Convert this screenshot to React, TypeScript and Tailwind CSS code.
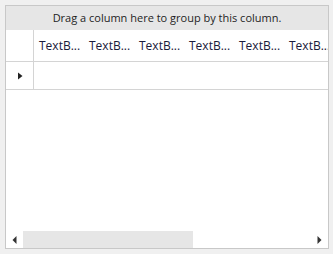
export default function App() {
  const cols = [0, 1, 2, 3, 4, 5];
  return (
    <div className="h-[254px] w-[333px] bg-[#f0f0f0] pl-[5px] pr-[4px] pt-[5px] pb-[5px] font-['Open_Sans',sans-serif] text-[#1e1e1e]">
      <div className="flex h-full flex-col border border-[#c8c8c8] bg-white">
        <div className="flex h-[24px] items-center justify-center bg-[#e6e6e6] text-[11px]">
          Drag a column here to group by this column.
        </div>
        <div className="flex h-[32px] border-b border-[#d4d4d4]">
          <div className="w-[28px] border-r border-[#d4d4d4]" />
          <div className="flex flex-1 overflow-hidden pl-[5px] text-[12px]">
            {cols.map((c) => (
              <div key={c} className="flex w-[50px] shrink-0 items-center text-[#1a1a3a]">
                TextB...
              </div>
            ))}
          </div>
        </div>
        <div className="flex h-[28px] border-b border-[#d4d4d4]">
          <div className="flex w-[28px] items-center justify-center border-r border-[#d4d4d4]">
            <svg width="6" height="8" viewBox="0 0 6 8">
              <path d="M1 0.5 L5.5 4 L1 7.5 Z" fill="#222" />
            </svg>
          </div>
          <div className="flex-1" />
        </div>
        <div className="flex-1" />
        <div className="flex h-[17px] items-stretch">
          <div className="flex w-[17px] items-center justify-center">
            <svg width="5" height="8" viewBox="0 0 5 8">
              <path d="M4.5 0 L0.5 4 L4.5 8 Z" fill="#333" />
            </svg>
          </div>
          <div className="w-[170px] bg-[#e6e6e6]" />
          <div className="flex-1" />
          <div className="flex w-[17px] items-center justify-center">
            <svg width="5" height="8" viewBox="0 0 5 8">
              <path d="M0.5 0 L4.5 4 L0.5 8 Z" fill="#333" />
            </svg>
          </div>
        </div>
      </div>
    </div>
  );
}
